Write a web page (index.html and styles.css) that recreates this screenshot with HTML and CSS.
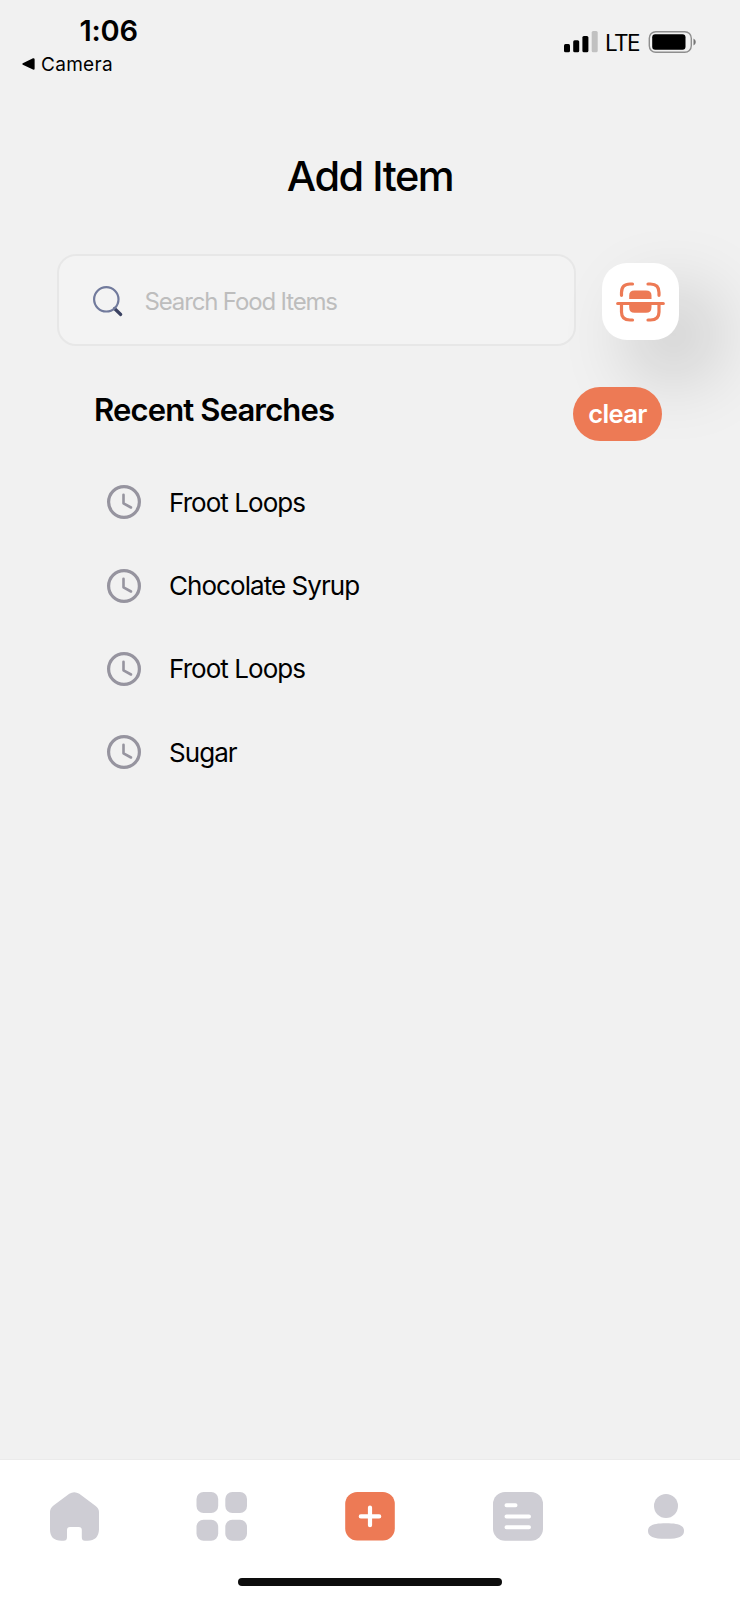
FILE: index.html
```html
<!DOCTYPE html>
<html lang="en">
<head>
<meta charset="utf-8">
<title>Add Item</title>
<link rel="stylesheet" href="styles.css">
</head>
<body>
<div class="screen">
  <header class="status">
    <div class="status-left">
      <div class="time">1:06</div>
      <div class="back">
        <svg width="13" height="12" viewBox="0 0 13 12"><path d="M.8 5.2 11 .3Q12.600 0 12.600 1.500V10.500Q12.600 12 11 11.600L.8 6.700Q-.4 6 .8 5.200Z"/></svg>
        <span>Camera</span>
      </div>
    </div>
    <div class="status-right">
      <svg width="34" height="22" viewBox="0 0 34 22"><rect x="0" y="13" width="6" height="8.300" rx="1.500"/><rect x="9.200" y="9.300" width="6" height="12" rx="1.500"/><rect x="18.400" y="5" width="6" height="16.300" rx="1.500"/><rect x="27.700" y="0" width="6" height="21.300" rx="1.500" fill="#c1c1c1"/></svg>
      <span class="lte">LTE</span>
      <svg width="48" height="22" viewBox="0 0 48 22"><rect x="1.300" y=".7" width="42" height="20.600" rx="6.500" fill="none" stroke="#8e8e8e" stroke-width="1.400"/><rect x="4.200" y="3.200" width="33.300" height="15.600" rx="3"/><path d="M45.500 7.500Q47.800 8.500 47.800 11T45.500 14.500Z" fill="#777"/></svg>
    </div>
  </header>

  <h1 class="title">Add Item</h1>

  <div class="search-row">
    <div class="search">
      <svg width="30" height="31" viewBox="0 0 30 31" fill="none"><path d="m21.500 22.500 6.200 6" stroke="#3b4262" stroke-width="3.200" stroke-linecap="round"/><circle cx="13.300" cy="13.300" r="12.200" stroke="#717a9c" stroke-width="2.200"/></svg>
      <span class="placeholder">Search Food Items</span>
    </div>
    <div class="scan">
      <svg width="49" height="40" viewBox="0 0 49 40"><g fill="none" stroke="#ed7a55" stroke-width="3.200" stroke-linecap="round"><path d="M5.500 13.300V10.500Q5.500 2 14 2H16.500M32 2H34.500Q43 2 43 10.500V13.300M5.500 22V30Q5.500 38 14 38H16.500M32 38H34.500Q43 38 43 30V22M1.700 21.500H47.300"/></g><path fill="#ed7a55" d="M13.200 17V13.500Q13.200 8.500 18.500 8.500H30Q35.500 8.500 35.500 13.500V17ZM13.200 22V25.300Q13.200 30.800 18.500 30.800H30Q35.500 30.800 35.500 25.300V22Z"/></svg>
    </div>
  </div>

  <div class="recent-head">
    <h2 class="recent-title">Recent Searches</h2>
    <div class="clear">clear</div>
  </div>

  <ul class="recent">
    <li><svg class="clock" viewBox="0 0 34 34"><circle cx="17" cy="17" r="15.400"/><path d="M16.500 9.700V18.300L24 22.500"/></svg><span>Froot Loops</span></li>
    <li><svg class="clock" viewBox="0 0 34 34"><circle cx="17" cy="17" r="15.400"/><path d="M16.500 9.700V18.300L24 22.500"/></svg><span>Chocolate Syrup</span></li>
    <li><svg class="clock" viewBox="0 0 34 34"><circle cx="17" cy="17" r="15.400"/><path d="M16.500 9.700V18.300L24 22.500"/></svg><span>Froot Loops</span></li>
    <li><svg class="clock" viewBox="0 0 34 34"><circle cx="17" cy="17" r="15.400"/><path d="M16.500 9.700V18.300L24 22.500"/></svg><span>Sugar</span></li>
  </ul>

  <footer class="dock">
    <nav class="tabs">
      <svg viewBox="0 0 50 50"><path d="M20.300 1.800Q25.200-1.500 30.300 1.800L46 13.500Q50 16.300 50 20V37.500Q49.500 48.700 38.500 48.700H36Q32.800 48.700 32.800 45.200V38Q32.800 35 29.800 35H21Q18 35 18 38V45.200Q18 48.700 14.500 48.700H12.500Q1 48.700 1 37.500V20Q1 16.300 4.500 13.500Z"/></svg>
      <svg viewBox="0 0 50 50"><rect x="-.5" y="0" width="21.700" height="21" rx="7"/><rect x="28.300" y="0" width="21.700" height="21" rx="7"/><rect x="-.5" y="27.700" width="21.700" height="21" rx="7"/><rect x="28.300" y="27.700" width="21.700" height="21" rx="7"/></svg>
      <svg viewBox="0 0 50 50"><rect x=".2" y="0" width="49.600" height="48.500" rx="12" fill="#ed7a55"/><path d="M15.800 24.400H34.200M25 15.500V33.200" stroke="#fff" stroke-width="4.200" stroke-linecap="round"/></svg>
      <svg viewBox="0 0 50 50"><rect x="0" y="0" width="50" height="48.700" rx="12"/><path d="M13.500 13.300H22.500M13.500 24.400H36M13.500 35.300H36" stroke="#fff" stroke-width="4" stroke-linecap="round"/></svg>
      <svg viewBox="0 0 50 50"><circle cx="25" cy="13.900" r="12"/><path d="M7 38.900C7 33.500 12 31.300 25 31.300S43 33.500 43 38.900 38 46.800 25 46.800 7 44.300 7 38.900Z"/></svg>
    </nav>
    <div class="home-indicator"></div>
  </footer>
</div>
</body>
</html>
```

FILE: styles.css
```css
* { box-sizing: border-box; }
body { margin: 0; background: #f1f1f1; font-family: Inter, sans-serif; color: #000; }
svg { display: block; flex: none; overflow: visible; }
.screen { width: 740px; height: 1600px; overflow: hidden; display: flex; flex-direction: column; background: #f1f1f1; white-space: nowrap; }

.status { height: 142px; display: flex; justify-content: space-between; padding: 12px 44px 0 22px; }
.time { height: 38px; line-height: 38px; margin-left: 57.500px; font-size: 29px; font-weight: 600; letter-spacing: -.2px; }
.back { display: flex; align-items: center; gap: 6px; height: 28px; font-size: 19px; letter-spacing: .3px; }
.status-right { display: flex; align-items: center; height: 60px; }
.lte { width: 50px; padding-left: 7px; font-size: 22.500px; letter-spacing: -1.600px; }

.title { margin: 0; height: 112px; line-height: 69px; text-align: center; font-size: 41.500px; font-weight: 500; letter-spacing: -1.500px; }

.search-row { display: flex; align-items: center; gap: 26px; height: 92px; padding-left: 57px; }
.search { display: flex; align-items: center; gap: 21.500px; width: 519px; height: 92px; padding: 2px 0 0 34px; border: 2px solid #e7e7e7; border-radius: 19px; background: #f3f3f3; }
.placeholder { font-size: 24px; color: #bdbdbd; letter-spacing: -1.150px; }
.scan { display: flex; align-items: center; justify-content: center; width: 77px; height: 77px; margin-top: 2px; padding-top: 1px; border-radius: 25px; background: #fff; box-shadow: 33px 33px 76px rgba(0, 0, 0, .2); }

.recent-head { display: flex; justify-content: space-between; height: 114px; padding: 41px 78px 0 94px; }
.recent-title { margin: 0; height: 48px; line-height: 46px; font-size: 31px; font-weight: 600; letter-spacing: -.850px; }
.clear { width: 89px; height: 53.500px; line-height: 53.500px; border-radius: 27px; background: #ed7a55; color: #fff; text-align: center; font-size: 25.500px; font-weight: 600; letter-spacing: -.6px; position: relative; }

.recent { margin: 0; padding: 0 0 0 106.500px; list-style: none; }
.recent li { display: flex; align-items: center; gap: 28.500px; height: 83.400px; padding-top: 1px; font-size: 26px; letter-spacing: -.950px; }
.clock { width: 34px; height: 34px; fill: none; stroke: #96949f; stroke-width: 3.200; stroke-linecap: round; stroke-linejoin: round; }
.clock path { stroke-width: 2.600; }

.dock { margin-top: auto; height: 141px; border-top: 1px solid #ebebeb; background: #fff; display: flex; flex-direction: column; align-items: center; }
.tabs { display: grid; grid-template-columns: repeat(5, 1fr); justify-items: center; width: 740px; height: 117.500px; padding-top: 32.300px; fill: #cecdd4; }
.tabs svg { width: 50px; height: 50px; }
.home-indicator { width: 264px; height: 8.500px; border-radius: 5px; background: #0d0d0d; }
```
